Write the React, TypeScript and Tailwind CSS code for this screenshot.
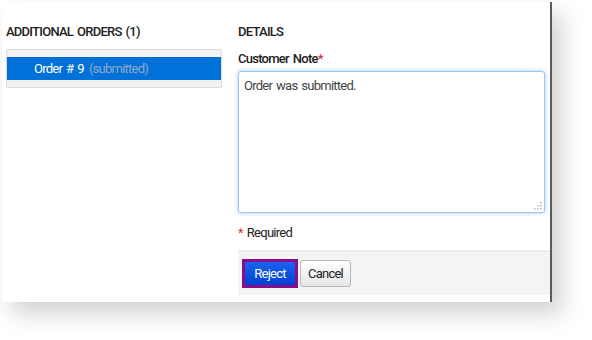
export default function App() {
  return (
    <div className="h-[340px] w-[592px] bg-white pl-[2px] pt-[2px] font-['Roboto',Arial,sans-serif] tracking-[-0.75px] text-[#222] [word-spacing:1.5px]">
      <div className="flex h-[300px] w-[550px] border-r-2 border-[#5a5a5a] bg-white shadow-[10px_12px_22px_rgba(0,0,0,0.18)]">
        {/* left: order list */}
        <div className="w-[220px] pl-[4px] pt-[22px]">
          <h2 className="text-[13px] font-medium leading-[16px]">ADDITIONAL ORDERS (1)</h2>
          <div className="mt-[9px] w-[216px] rounded-[2px] border border-[#dcdcdc] bg-[#f2f2f2] py-[7px]">
            <div className="flex h-[23px] items-center bg-[#0071d8] pl-[27px] text-[13px]">
              <span className="text-white">Order # 9</span>
              <span className="ml-[5px] text-[#8fa9cc]">(submitted)</span>
            </div>
          </div>
        </div>

        {/* right: details */}
        <div className="ml-[16px] flex flex-1 flex-col pt-[22px]">
          <h2 className="text-[13px] font-medium leading-[16px]">DETAILS</h2>
          <label className="mt-[11px] text-[13px] font-medium leading-[16px]">
            Customer Note<span className="text-[#d33]">*</span>
          </label>
          <div className="relative mt-[4px] w-[307px]">
            <textarea
              defaultValue="Order was submitted."
              className="block h-[142px] w-full resize-none rounded-[3px] border border-[#9cc8f0] px-[5px] pt-[6px] text-[13px] leading-[16px] tracking-[-0.75px] text-[#444] shadow-[0_0_4px_rgba(100,170,240,0.6)] outline-none [word-spacing:1.5px]"
            />
            <svg className="absolute bottom-[3px] right-[3px]" width="8" height="8" viewBox="0 0 8 8">
              <g fill="#b5b5b5">
                <rect x="6" y="0" width="1.5" height="1.5" />
                <rect x="3" y="3" width="1.5" height="1.5" />
                <rect x="6" y="3" width="1.5" height="1.5" />
                <rect x="0" y="6" width="1.5" height="1.5" />
                <rect x="3" y="6" width="1.5" height="1.5" />
                <rect x="6" y="6" width="1.5" height="1.5" />
              </g>
            </svg>
          </div>
          <div className="mt-[12px] text-[13px] leading-[16px]">
            <span className="text-[#d33]">*</span> Required
          </div>
          <div className="mt-[9px] flex h-[45px] items-center gap-[2px] border-t-2 border-[#ececec] bg-[#f4f4f4] pl-[4px]">
            <button className="h-[29px] w-[56px] border-[3px] border-[#8a0c8a] bg-gradient-to-b from-[#1a63f0] to-[#0040d0] text-[13px] tracking-[-0.75px] text-white">
              Reject
            </button>
            <button className="h-[27px] w-[51px] rounded-[3px] border border-[#b8b8b8] bg-gradient-to-b from-white to-[#e6e6e6] text-[13px] tracking-[-0.75px] text-[#222]">
              Cancel
            </button>
          </div>
        </div>
      </div>
    </div>
  );
}
